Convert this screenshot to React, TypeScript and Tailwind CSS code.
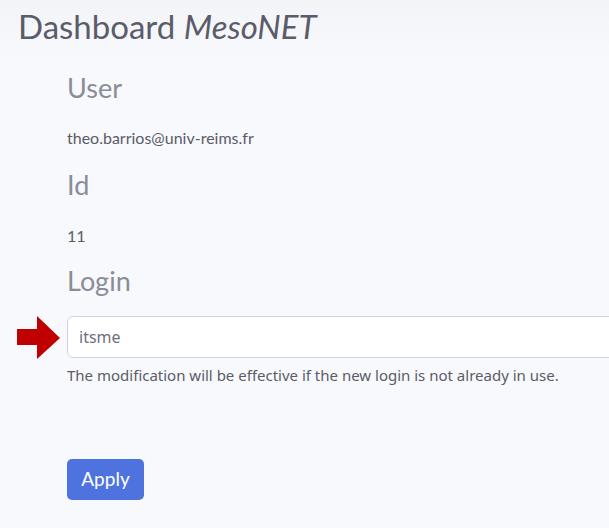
import React from "react";

// Arrow pointing at the login field
function RedArrow() {
  return (
    <svg width="44" height="44" viewBox="0 0 44 44" className="shrink-0">
      <polygon points="0,13 20,13 20,0 43,22 20,43 20,29 0,29" fill="#c00000" />
    </svg>
  );
}

export default function App() {
  return (
    <div
      className="min-h-[528px] w-[609px] overflow-hidden bg-gradient-to-b from-[#f3f4f8] to-[#f8f9fc] to-[60px] text-[#5a5c69]"
      style={{ fontFamily: "Lato, 'Noto Sans', sans-serif" }}
    >
      <h1 className="pl-[18px] pt-[4px] text-[33px] leading-[44px] font-normal text-[#5a5c69]">
        Dashboard <em>MesoNET</em>
      </h1>

      <div className="pl-[67px] pt-[23px]">
        <h2 className="text-[27px] leading-[34px] text-[#8a8c99]">User</h2>
        <p className="mt-[22px] text-[16px] leading-[22px] text-[#5a5c69]">theo.barrios@univ-reims.fr</p>

        <h2 className="mt-[19px] text-[27px] leading-[34px] text-[#8a8c99]">Id</h2>
        <p className="mt-[23px] text-[16px] leading-[22px] text-[#5a5c69]">11</p>

        <h2 className="mt-[17px] text-[27px] leading-[34px] text-[#8a8c99]">Login</h2>

        <div className="relative mt-[18px]">
          <div className="absolute left-[-50px] top-0">
            <RedArrow />
          </div>
          <input
            defaultValue="itsme"
            className="block h-[42px] w-[600px] rounded-[6px] border border-[#d1d3e2] bg-white px-[11px] text-[16px] text-[#6e707e] outline-none"
            style={{ fontFamily: "'Noto Sans', sans-serif" }}
          />
          <p
            className="mt-[7px] text-[15px] leading-[20px] text-[#5a5c69]"
            style={{ fontFamily: "'Noto Sans', sans-serif" }}
          >
            The modification will be effective if the new login is not already in use.
          </p>
        </div>

        <button className="mt-[74px] h-[41px] w-[77px] rounded-[5px] bg-[#4e73df] text-[19px] text-white">
          Apply
        </button>
      </div>
    </div>
  );
}
